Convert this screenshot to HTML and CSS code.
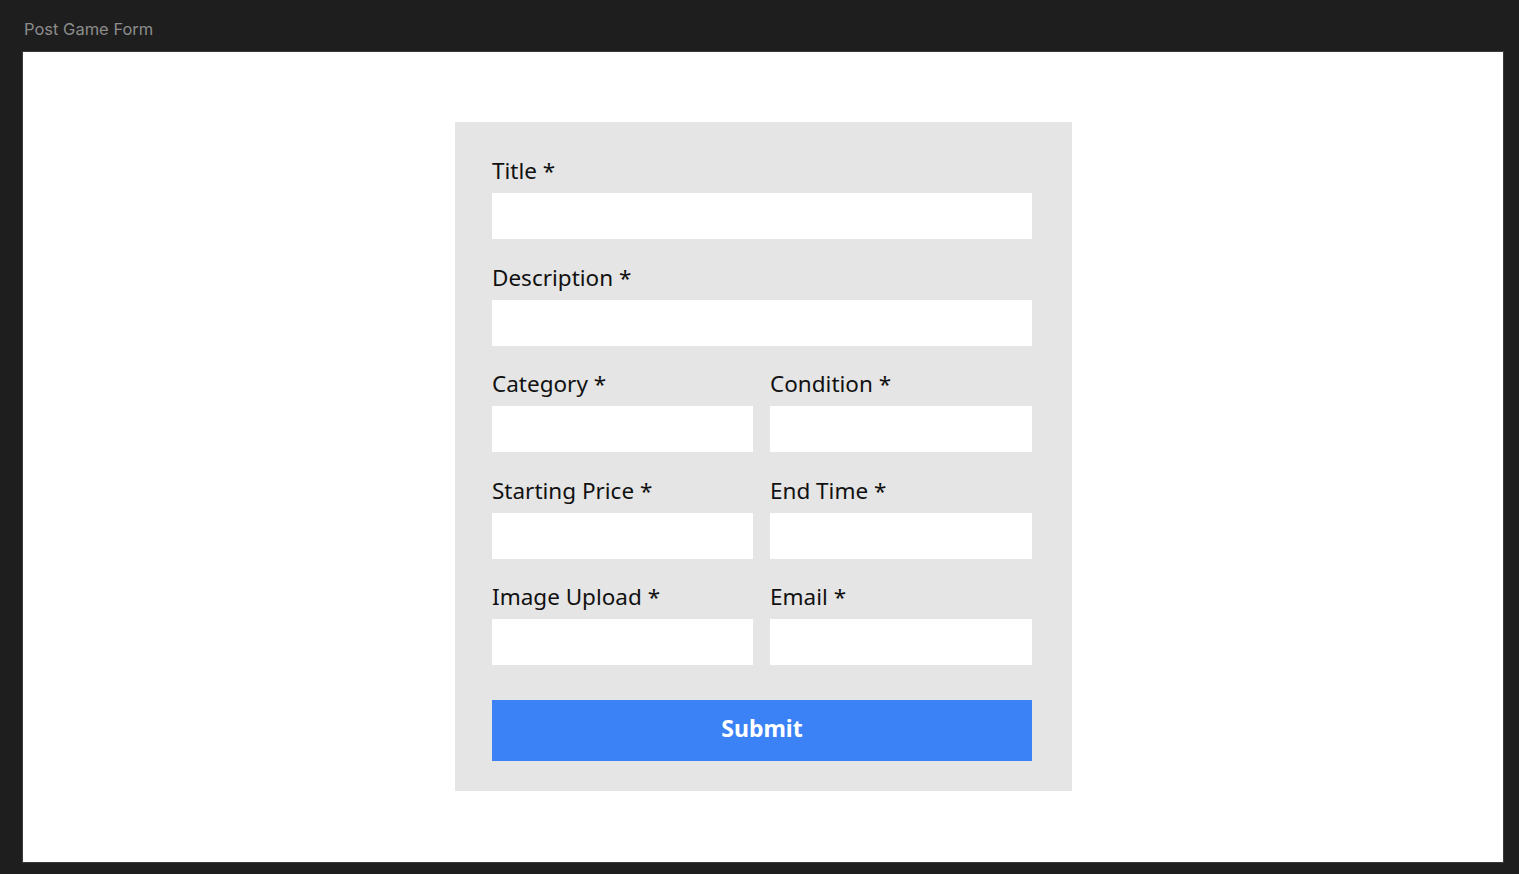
FILE: index.html
```html
<!DOCTYPE html>
<html>
<head>
<meta charset="utf-8">
<title>Post Game Form</title>
<link rel="stylesheet" href="styles.css">
</head>
<body>
<div class="topbar">Post Game Form</div>
<div class="frame">
  <form class="panel">
    <div class="field">
      <label class="label">Title *</label>
      <div class="input"></div>
    </div>
    <div class="field">
      <label class="label">Description *</label>
      <div class="input"></div>
    </div>
    <div class="row">
      <div class="field">
        <label class="label">Category *</label>
        <div class="input"></div>
      </div>
      <div class="field">
        <label class="label">Condition *</label>
        <div class="input"></div>
      </div>
    </div>
    <div class="row">
      <div class="field">
        <label class="label">Starting Price *</label>
        <div class="input"></div>
      </div>
      <div class="field">
        <label class="label">End Time *</label>
        <div class="input"></div>
      </div>
    </div>
    <div class="row">
      <div class="field">
        <label class="label">Image Upload *</label>
        <div class="input"></div>
      </div>
      <div class="field">
        <label class="label">Email *</label>
        <div class="input"></div>
      </div>
    </div>
    <div class="submit">Submit</div>
  </form>
</div>
</body>
</html>
```
FILE: styles.css
```css
html, body {
  margin: 0;
  padding: 0;
}
body {
  background: #1e1e1e;
  width: 1519px;
  height: 874px;
  overflow: hidden;
}
.topbar {
  height: 51px;
  box-sizing: border-box;
  padding: 19px 0 0 24px;
  font-family: Inter, "Noto Sans", sans-serif;
  font-size: 16.5px;
  line-height: 20px;
  color: #8c8c8c;
}
.frame {
  margin-left: 22px;
  width: 1482px;
  height: 812px;
  box-sizing: border-box;
  border: 1px solid #3a3a3a;
  background: #ffffff;
  display: flex;
  align-items: flex-start;
  justify-content: center;
  padding-left: 1px;
  padding-top: 70px;
}
.panel {
  width: 617px;
  height: 669px;
  box-sizing: border-box;
  background: #e5e5e5;
  padding: 35px 40px 30px 37px;
  display: flex;
  flex-direction: column;
  font-family: "Noto Sans", sans-serif;
  margin: 0;
}
.field {
  display: flex;
  flex-direction: column;
  margin-bottom: 24.5px;
  min-width: 0;
}
.row {
  display: grid;
  grid-template-columns: 261px 262px;
  column-gap: 17px;
}
.label {
  font-size: 22.5px;
  line-height: 28px;
  color: #111111;
  margin-bottom: 8px;
}
.input {
  height: 46px;
  background: #ffffff;
}
.submit {
  margin-top: 10.5px;
  height: 61px;
  box-sizing: border-box;
  padding-bottom: 5px;
  background: #3b82f6;
  color: #ffffff;
  font-weight: 700;
  font-size: 23px;
  display: flex;
  align-items: center;
  justify-content: center;
}
```
